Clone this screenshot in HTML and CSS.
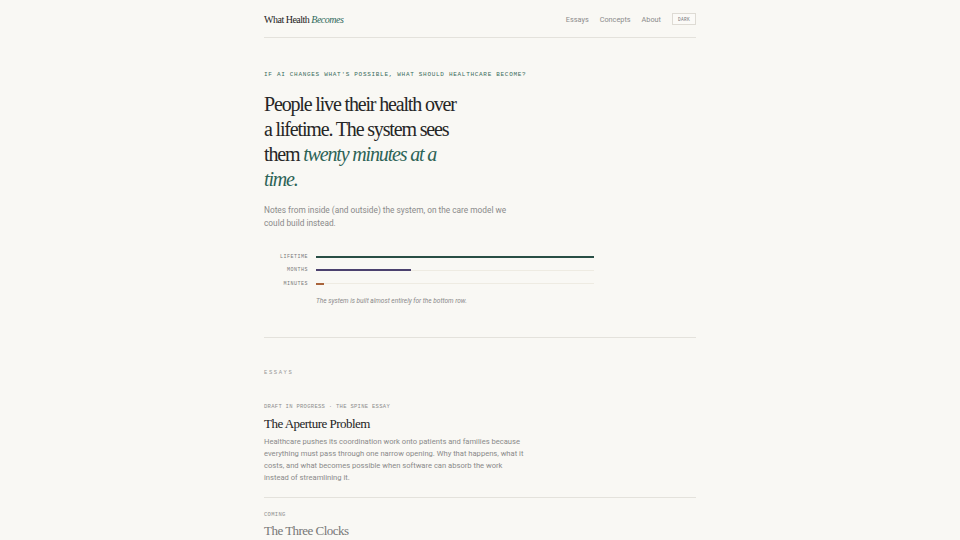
FILE: index.html
```html
<!DOCTYPE html>
<html lang="en">
<head>
    <meta charset="UTF-8">
    <title>What Health Becomes</title>
    <link rel="stylesheet" href="styles.css">
</head>
<body>
<div class="page">
    <header class="site-header">
        <a class="logo" href="#">What Health <em>Becomes</em></a>
        <nav class="nav">
            <a href="#">Essays</a>
            <a href="#">Concepts</a>
            <a href="#">About</a>
            <button class="theme-toggle">DARK</button>
        </nav>
    </header>

    <section class="hero">
        <p class="eyebrow">If AI changes what's possible, what should healthcare become?</p>
        <h1 class="headline">People live their health over<br>a lifetime. The system sees<br>them <em>twenty minutes at a<br>time.</em></h1>
        <p class="lede">Notes from inside (and outside) the system, on the care model we could build instead.</p>

        <div class="scales">
            <div class="scale">
                <span class="scale-label">Lifetime</span>
                <div class="track"><div class="bar bar-lifetime" style="width: 100%"></div></div>
            </div>
            <div class="scale">
                <span class="scale-label">Months</span>
                <div class="track"><div class="bar bar-months" style="width: 34%"></div></div>
            </div>
            <div class="scale">
                <span class="scale-label">Minutes</span>
                <div class="track"><div class="bar bar-minutes" style="width: 3%"></div></div>
            </div>
            <p class="scales-note">The system is built almost entirely for the bottom row.</p>
        </div>
    </section>

    <section class="essays">
        <h2 class="section-title">Essays</h2>

        <article class="essay">
            <p class="essay-meta">Draft in progress · The spine essay</p>
            <h3 class="essay-title">The Aperture Problem</h3>
            <p class="essay-text">Healthcare pushes its coordination work onto patients and families because everything must pass through one narrow opening. Why that happens, what it costs, and what becomes possible when software can absorb the work instead of streamlining it.</p>
        </article>

        <article class="essay essay-coming">
            <p class="essay-meta">Coming</p>
            <h3 class="essay-title">The Three Clocks</h3>
        </article>
    </section>
</div>
</body>
</html>
```

FILE: styles.css
```css
* {
    margin: 0;
    padding: 0;
    box-sizing: border-box;
}

body {
    background-color: #f9f8f4;
    color: #222;
    font-family: "Roboto", "Liberation Sans", sans-serif;
}

a {
    color: inherit;
    text-decoration: none;
}

.page {
    width: 432px;
    margin: 0 auto;
}

/* header */

.site-header {
    display: flex;
    justify-content: space-between;
    align-items: center;
    height: 38px;
    padding-top: 1px;
    border-bottom: 1px solid #e4e2dc;
}

.logo {
    font-family: "Liberation Serif", serif;
    font-size: 10px;
    letter-spacing: -0.05em;
    color: #222;
}

.logo em {
    color: #2f6a5c;
}

.nav {
    display: flex;
    align-items: center;
    gap: 11px;
}

.nav a {
    font-size: 7.3px;
    color: #8c8c8c;
}

.theme-toggle {
    height: 12px;
    width: 24px;
    border: 1px solid #dedbd4;
    background: #fbfaf7;
    font-family: "Liberation Mono", monospace;
    font-size: 4.5px;
    letter-spacing: 0.08em;
    color: #777;
}

/* hero */

.hero {
    padding-top: 32px;
    padding-bottom: 31px;
    border-bottom: 1px solid #e4e2dc;
}

.eyebrow {
    font-family: "Liberation Mono", monospace;
    font-size: 6px;
    line-height: 10px;
    letter-spacing: 0.7px;
    text-transform: uppercase;
    color: #3b6d60;
}

.headline {
    margin-top: 12px;
    font-family: "Liberation Serif", serif;
    font-weight: normal;
    font-size: 20px;
    line-height: 25px;
    letter-spacing: -0.058em;
    color: #262626;
}

.headline em {
    color: #2d6356;
}

.lede {
    margin-top: 12px;
    width: 250px;
    font-size: 8.3px;
    line-height: 13px;
    color: #8a8a8a;
}

.scales {
    margin-top: 20px;
    width: 330px;
}

.scale {
    display: grid;
    grid-template-columns: 44px 1fr;
    column-gap: 8px;
    align-items: center;
    height: 13.5px;
}

.scale-label {
    font-family: "Liberation Mono", monospace;
    font-size: 5px;
    letter-spacing: 0.5px;
    text-transform: uppercase;
    text-align: right;
    color: #7a7a7a;
}

.track {
    height: 2px;
    background: linear-gradient(#eeebe2, #eeebe2) center / 100% 1px no-repeat;
}

.bar {
    height: 2px;
}

.bar-lifetime { background-color: #294e45; }
.bar-months { background-color: #4b416e; }
.bar-minutes { background-color: #a9643c; }

.scales-note {
    margin-top: 5px;
    padding-left: 52px;
    font-size: 6.5px;
    line-height: 10px;
    font-style: italic;
    color: #8a8a8a;
}

/* essays */

.essays {
    padding-top: 30px;
}

.section-title {
    font-family: "Liberation Mono", monospace;
    font-weight: normal;
    font-size: 5.5px;
    line-height: 10px;
    letter-spacing: 1.6px;
    text-transform: uppercase;
    color: #999;
}

.essay {
    margin-top: 24px;
    padding-bottom: 13px;
    border-bottom: 1px solid #e4e2dc;
}

.essay-meta {
    font-family: "Liberation Mono", monospace;
    font-size: 5.5px;
    line-height: 10px;
    letter-spacing: 0.3px;
    text-transform: uppercase;
    color: #8e8e8e;
}

.essay-title {
    margin-top: 3px;
    font-family: "Liberation Serif", serif;
    font-weight: normal;
    font-size: 13px;
    line-height: 18px;
    letter-spacing: -0.04em;
    color: #222;
}

.essay-text {
    margin-top: 3px;
    width: 262px;
    font-size: 7.6px;
    line-height: 12px;
    color: #8a8a8a;
}

.essay-coming {
    margin-top: 0;
    padding-top: 12px;
    border-bottom: none;
}

.essay-coming .essay-title {
    margin-top: 2px;
    color: #777;
}
```
